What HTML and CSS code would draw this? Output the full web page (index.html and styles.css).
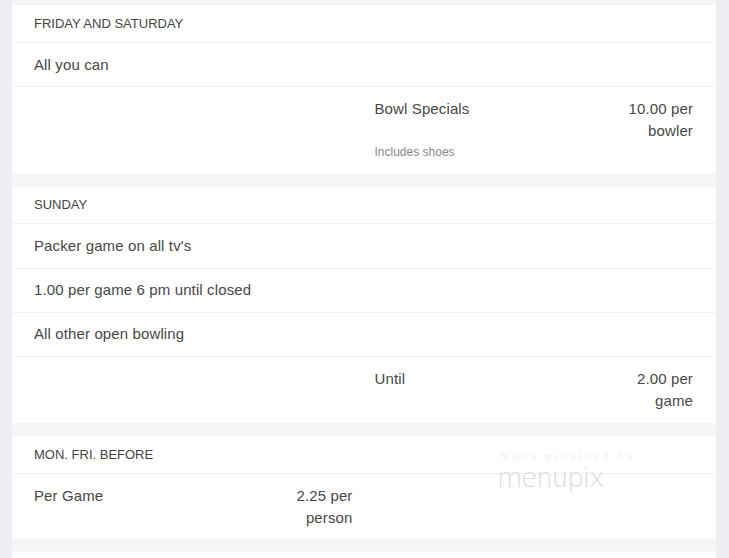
FILE: index.html
```html
<!DOCTYPE html>
<html>
<head>
<meta charset="utf-8">
<link rel="stylesheet" href="styles.css">
</head>
<body>
<div class="page">
  <section class="card">
    <div class="cat">FRIDAY AND SATURDAY</div>
    <div class="row"><div class="note">All you can</div></div>
    <div class="row split">
      <div class="half"></div>
      <div class="half">
        <div class="item">
          <div class="name">Bowl Specials</div>
          <div class="price">10.00 per bowler</div>
        </div>
        <div class="desc">Includes shoes</div>
      </div>
    </div>
  </section>

  <section class="card">
    <div class="cat">SUNDAY</div>
    <div class="row"><div class="note">Packer game on all tv's</div></div>
    <div class="row"><div class="note">1.00 per game 6 pm until closed</div></div>
    <div class="row"><div class="note">All other open bowling</div></div>
    <div class="row split">
      <div class="half"></div>
      <div class="half">
        <div class="item">
          <div class="name">Until</div>
          <div class="price">2.00 per game</div>
        </div>
      </div>
    </div>
  </section>

  <section class="card">
    <div class="cat">MON. FRI. BEFORE</div>
    <div class="row split">
      <div class="half">
        <div class="item">
          <div class="name">Per Game</div>
          <div class="price">2.25 per person</div>
        </div>
      </div>
      <div class="half"></div>
    </div>
  </section>

  <section class="card"></section>

  <div class="watermark">
    <div class="wm-small">menu provided by</div>
    <div class="wm-logo">menupix</div>
  </div>
</div>
</body>
</html>
```

FILE: styles.css
```css
html, body {
  margin: 0;
  padding: 0;
}
body {
  background: #eeeef3;
  font-family: "Liberation Sans", Arial, sans-serif;
  color: #474747;
  overflow: hidden;
  height: 558px;
}
.page {
  position: relative;
  margin: 0 13px 0 12px;
  padding-top: 4px;
  background: #f6f6f7;
  min-height: 554px;
}
.card {
  background: #fff;
  border-top: 1px solid #f1f1f1;
  margin-bottom: 12px;
  min-height: 20px;
}
.cat {
  font-size: 13px;
  line-height: 15px;
  padding: 11px 23px 11px 22px;
  color: #444;
  border-bottom: 1px solid #f0f0f0;
}
.row {
  padding: 10.5px 23px 10.75px 22px;
  border-bottom: 1px solid #f0f0f0;
  font-size: 15px;
  line-height: 22px;
  letter-spacing: 0.12px;
}
.row:last-child {
  border-bottom: none;
}
.split {
  display: flex;
  gap: 22px;
  padding-top: 11px;
  padding-bottom: 10.5px;
}
.half {
  flex: 1 1 0;
  min-width: 0;
}
.item {
  display: flex;
  justify-content: space-between;
  align-items: flex-start;
  gap: 12px;
}
.price {
  flex: 0 0 80px;
  text-align: right;
}
.desc {
  font-size: 12px;
  line-height: 16px;
  color: #8a8a8a;
  margin-top: 2px;
  margin-bottom: 2.5px;
  letter-spacing: 0;
}
.watermark {
  position: absolute;
  left: 485px;
  top: 449px;
  width: 170px;
  pointer-events: none;
}
.wm-small {
  font-size: 11px;
  letter-spacing: 3px;
  color: #f1f1f1;
  line-height: 14px;
  padding-left: 3px;
}
.wm-logo {
  font-family: "DejaVu Sans", sans-serif;
  font-weight: 200;
  font-size: 26px;
  line-height: 30px;
  color: #dadada;
  letter-spacing: -1px;
}
```
